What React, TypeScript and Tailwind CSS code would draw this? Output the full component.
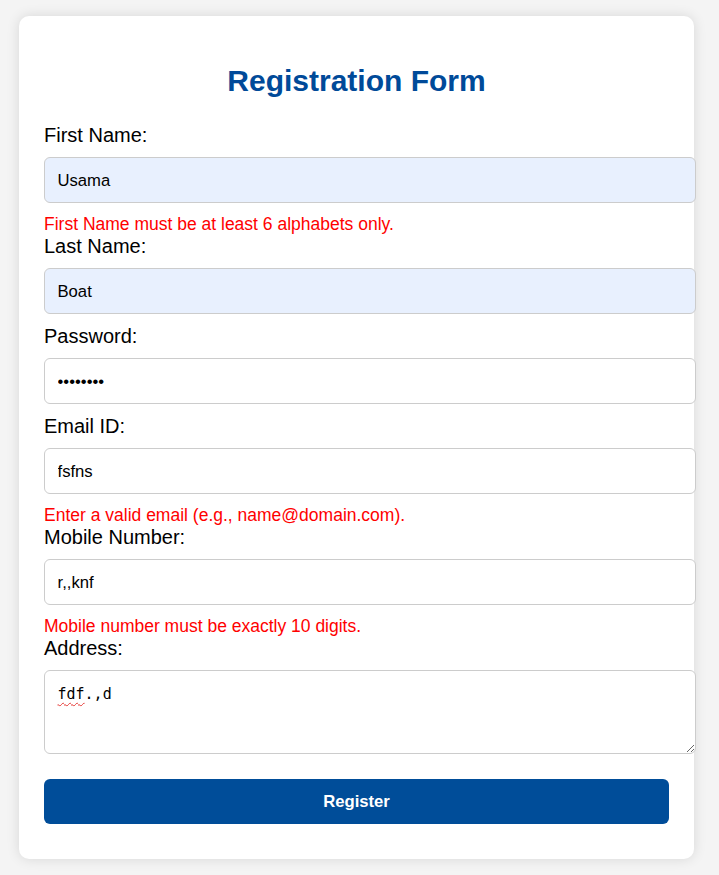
import React, { useState } from "react";

const font = { fontFamily: '"Liberation Sans", Arial, sans-serif' };

const inputClass =
	"box-content block w-full h-[19px] px-[12.5px] py-[12.5px] border border-[#cccccc] rounded-[6px] text-[16.67px] leading-[19px] text-black outline-none";

interface FieldProps {
	label: string;
	value: string;
	type?: string;
	autofill?: boolean;
	error?: string;
}

const Field: React.FC<FieldProps> = ({ label, value, type = "text", autofill, error }) => {
	const [val, setVal] = useState(value);
	return (
		<div>
			<label className="block text-[20px] leading-[23px] mb-[10.5px] text-black">{label}</label>
			<input
				type={type}
				value={val}
				onChange={(e) => setVal(e.target.value)}
				className={`${inputClass} mb-[10.5px] ${autofill ? "bg-[#e8f0fe]" : "bg-white"}`}
				style={font}
			/>
			{error && <div className="text-[17.5px] leading-[21px] text-[#ff0000]">{error}</div>}
		</div>
	);
};

export default function App() {
	const [address, setAddress] = useState("fdf.,d");

	return (
		<div className="min-h-[875px] bg-[#f4f4f4] pt-[16px] pb-[17px]" style={font}>
			<div className="ml-[19px] w-[675px] bg-white rounded-[10px] shadow-[0_0_12.5px_rgba(0,0,0,0.12)] px-[25px] pt-[25px] pb-[35px]">
				<h2 className="mt-[23px] mb-[25.5px] text-center text-[30px] leading-[34px] font-bold text-[#004a99]">
					Registration Form
				</h2>
				<form onSubmit={(e) => e.preventDefault()}>
					<Field label="First Name:" value="Usama" autofill error="First Name must be at least 6 alphabets only." />
					<Field label="Last Name:" value="Boat" autofill />
					<Field label="Password:" value="12345678" type="password" />
					<Field label="Email ID:" value="fsfns" error="Enter a valid email (e.g., name@domain.com)." />
					<Field label="Mobile Number:" value="r,,knf" error="Mobile number must be exactly 10 digits." />
					<div>
						<label className="block text-[20px] leading-[23px] mb-[10.5px] text-black">Address:</label>
						<div className="relative mb-[25px]">
							<textarea
								value={address}
								onChange={(e) => setAddress(e.target.value)}
								spellCheck={false}
								className="box-content block w-full h-[57px] px-[12.5px] pt-[13.5px] pb-[11.5px] border border-[#cccccc] rounded-[6px] text-[15px] leading-[18px] text-black bg-white outline-none resize-y"
								style={{ fontFamily: '"DejaVu Sans Mono", monospace' }}
							/>
							<span
								className="absolute left-[13.5px] top-[14.5px] text-[15px] leading-[18px] text-transparent underline decoration-wavy decoration-[#e53935] decoration-1 underline-offset-[3px] pointer-events-none"
								style={{ fontFamily: '"DejaVu Sans Mono", monospace' }}
							>
								fdf
							</span>
						</div>
					</div>
					<button
						type="submit"
						className="block w-full h-[45px] rounded-[6px] bg-[#004d99] text-white text-[16.67px] font-bold"
					>
						Register
					</button>
				</form>
			</div>
		</div>
	);
}
